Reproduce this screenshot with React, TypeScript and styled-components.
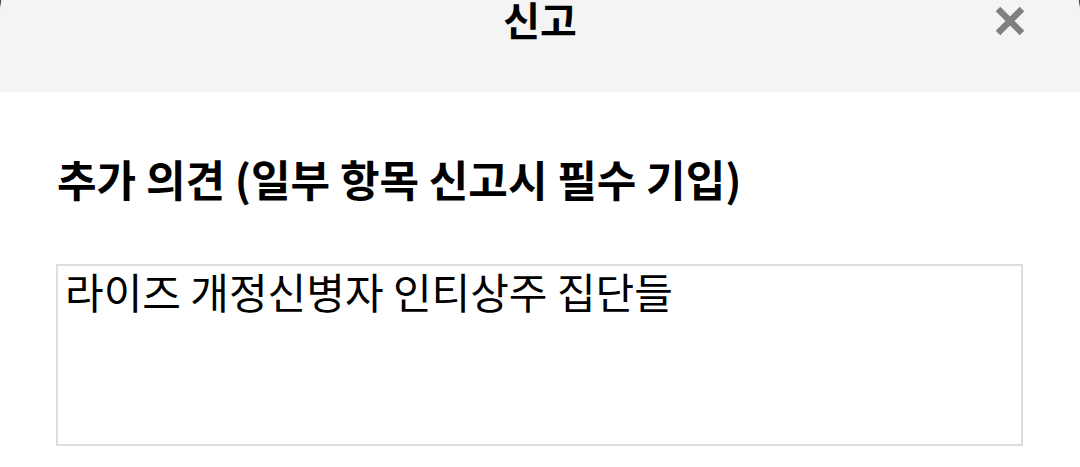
import React from "react";
import styled, { createGlobalStyle } from "styled-components";

const Global = createGlobalStyle`
  html, body { margin: 0; padding: 0; background: #4d4d4d; }
  body { font-family: "Noto Sans CJK KR", "Noto Sans", sans-serif; overflow: hidden; }
  * { box-sizing: border-box; }
`;

const Page = styled.div`
  width: 1080px;
  height: 467px;
  overflow: hidden;
`;

const Modal = styled.div`
  margin-top: -50px;
  width: 1080px;
  background: #ffffff;
  border-radius: 64px 64px 0 0;
  overflow: hidden;
`;

const Header = styled.div`
  position: relative;
  height: 142px;
  padding-bottom: 4px;
  background: #f4f4f4;
  display: flex;
  align-items: center;
  justify-content: center;
`;

const Title = styled.h1`
  margin: 0;
  font-size: 40px;
  font-weight: 700;
  color: #000;
  line-height: 1;
`;

const Close = styled.button`
  position: absolute;
  right: 50px;
  top: 51px;
  width: 40px;
  height: 40px;
  border: 0;
  padding: 0;
  background: transparent;
  display: flex;
  align-items: center;
  justify-content: center;
`;

const Body = styled.div`
  padding: 61px 57px 40px 57px;
  display: flex;
  flex-direction: column;
  gap: 61px;
`;

const Label = styled.h2`
  margin: 0;
  font-size: 43px;
  font-weight: 700;
  color: #000;
  line-height: 50px;
  white-space: nowrap;
`;

const TextBox = styled.div`
  margin-left: -1px;
  width: 967px;
  height: 182px;
  border: 2px solid #dddddd;
  padding: 0 7px;
  font-size: 42px;
  color: #000;
  line-height: 50px;
`;

export default function App() {
  return (
    <Page>
      <Global />
      <Modal>
        <Header>
          <Title>신고</Title>
          <Close aria-label="닫기">
            <svg width="32" height="32" viewBox="0 0 32 32">
              <path d="M4 4 L28 28 M28 4 L4 28" stroke="#808080" strokeWidth="6.5" strokeLinecap="butt" />
            </svg>
          </Close>
        </Header>
        <Body>
          <Label>추가 의견 (일부 항목 신고시 필수 기입)</Label>
          <TextBox>라이즈 개정신병자 인티상주 집단들</TextBox>
        </Body>
      </Modal>
    </Page>
  );
}
